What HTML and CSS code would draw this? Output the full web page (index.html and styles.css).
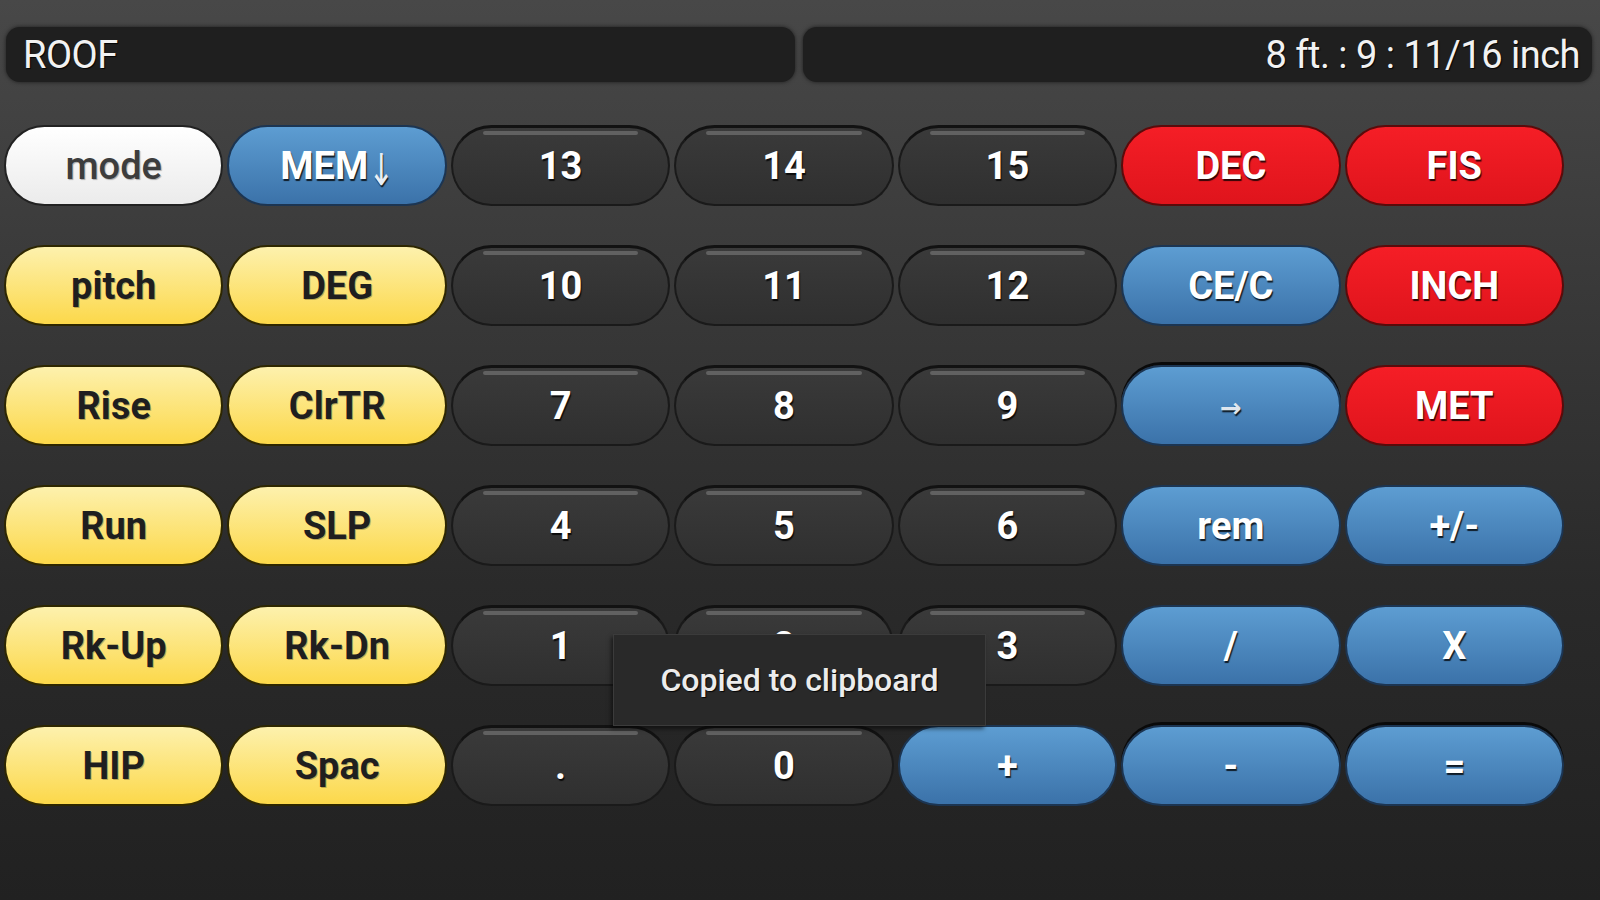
FILE: index.html
```html
<!DOCTYPE html>
<html>
<head>
  <title>Roof Calculator</title>
  <link rel="stylesheet" href="styles.css">
</head>
<body>
  <div class="app">
    <div class="display">
      <div class="screen">ROOF</div>
      <div class="screen screen-value">8 ft. : 9 : 11/16 inch</div>
    </div>

    <div class="keypad">
      <!-- row 1 -->
      <div class="key key-white">mode</div>
      <div class="key key-blue">MEM<span class="mem-arrow">↓</span></div>
      <div class="key key-dark">13</div>
      <div class="key key-dark">14</div>
      <div class="key key-dark">15</div>
      <div class="key key-red">DEC</div>
      <div class="key key-red">FIS</div>
      <!-- row 2 -->
      <div class="key key-yellow">pitch</div>
      <div class="key key-yellow">DEG</div>
      <div class="key key-dark">10</div>
      <div class="key key-dark">11</div>
      <div class="key key-dark">12</div>
      <div class="key key-blue">CE/C</div>
      <div class="key key-red">INCH</div>
      <!-- row 3 -->
      <div class="key key-yellow">Rise</div>
      <div class="key key-yellow">ClrTR</div>
      <div class="key key-dark">7</div>
      <div class="key key-dark">8</div>
      <div class="key key-dark">9</div>
      <div class="key key-blue key-pressed"><span class="small-arrow">→</span></div>
      <div class="key key-red">MET</div>
      <!-- row 4 -->
      <div class="key key-yellow">Run</div>
      <div class="key key-yellow">SLP</div>
      <div class="key key-dark">4</div>
      <div class="key key-dark">5</div>
      <div class="key key-dark">6</div>
      <div class="key key-blue">rem</div>
      <div class="key key-blue">+/-</div>
      <!-- row 5 -->
      <div class="key key-yellow">Rk-Up</div>
      <div class="key key-yellow">Rk-Dn</div>
      <div class="key key-dark">1</div>
      <div class="key key-dark">2</div>
      <div class="key key-dark">3</div>
      <div class="key key-blue">/</div>
      <div class="key key-blue">X</div>
      <!-- row 6 -->
      <div class="key key-yellow">HIP</div>
      <div class="key key-yellow">Spac</div>
      <div class="key key-dark">.</div>
      <div class="key key-dark">0</div>
      <div class="key key-blue">+</div>
      <div class="key key-blue key-pressed">-</div>
      <div class="key key-blue key-pressed">=</div>
    </div>

    <div class="toast">Copied to clipboard</div>
  </div>
</body>
</html>
```

FILE: styles.css
```css
body {
  margin: 0;
  width: 1600px;
  height: 900px;
  overflow: hidden;
  background: linear-gradient(#484848, #3a3a3a 30%, #2a2a2a 65%, #212121);
  font-family: Roboto, "Liberation Sans", sans-serif;
}
.app {
  position: relative;
  height: 900px;
  padding-top: 27px;
  box-sizing: border-box;
}
.display {
  display: flex;
  gap: 8px;
  height: 55px;
  padding: 0 8px 0 6px;
}
.screen {
  flex: 1;
  display: flex;
  align-items: center;
  padding: 0 12px 0 17px;
  background-color: #1f1f1f;
  border-radius: 14px;
  box-shadow: 0 0 4px rgba(0,0,0,0.6);
  color: #f2f2f2;
  font-size: 38px;
  letter-spacing: -0.5px;
  text-shadow: 1px 1px 1px rgba(0,0,0,0.9);
}
.screen-value {
  justify-content: flex-end;
}
.keypad {
  display: grid;
  grid-template-columns: repeat(7, 1fr);
  grid-auto-rows: 81px;
  gap: 39px 4px;
  width: 1560px;
  margin: 43px 0 0 4px;
}
.key {
  position: relative;
  display: flex;
  align-items: center;
  justify-content: center;
  box-sizing: border-box;
  border: 2px solid rgba(0,0,0,0.75);
  border-radius: 41px;
  color: white;
  font-size: 38px;
  font-weight: 700;
  text-shadow: 1px 2px 1px rgba(0,0,0,0.8);
}
.key-dark {
  background: linear-gradient(#3a3a3a, #2f2f2f);
  border-color: #1a1a1a;
  border-top-width: 3px;
  border-top-color: #121212;
}
.key-dark::before {
  content: "";
  position: absolute;
  top: 3px;
  left: 30px;
  right: 30px;
  height: 4px;
  border-radius: 2px;
  background-color: #616161;
}
.key-blue {
  background: linear-gradient(#5d9dd2, #3b72a9);
  border-color: #1c3552;
}
.key-red {
  background: linear-gradient(#f51e26, #df141c);
  border-color: #5a0b0b;
}
.key-yellow {
  background: linear-gradient(#fdf1ad, #fcd84a);
  border-color: #2e2700;
  color: #1f1f1f;
  text-shadow: 1px 1px 0 rgba(0,0,0,0.25);
}
.key-white {
  background: linear-gradient(#ffffff, #ebebeb);
  border-color: #222;
  color: #3d3d3d;
  font-weight: 500;
  text-shadow: 1px 1px 1px rgba(0,0,0,0.3);
}
.key-pressed {
  box-shadow: 0 -3px 0 #0a0a0a;
}
.mem-arrow {
  font-family: "DejaVu Sans", sans-serif;
  font-weight: 400;
  font-size: 44px;
  color: #e8eef5;
  margin-top: 8px;
  margin-left: -5px;
  margin-right: -6px;
  transform: scaleX(0.7);
}
.small-arrow {
  font-family: "DejaVu Sans", sans-serif;
  font-size: 26px;
  color: #dfe6ee;
  margin-top: 4px;
}
.toast {
  position: absolute;
  left: 613px;
  top: 634px;
  width: 373px;
  height: 92px;
  display: flex;
  align-items: center;
  justify-content: center;
  box-sizing: border-box;
  background-color: #292929;
  border: 1px solid #3b3b3b;
  box-shadow: -2px 3px 4px rgba(0,0,0,0.5);
  color: #ececec;
  font-size: 32px;
  font-weight: 500;
  text-shadow: 1px 1px 1px rgba(0,0,0,0.9);
}
```
